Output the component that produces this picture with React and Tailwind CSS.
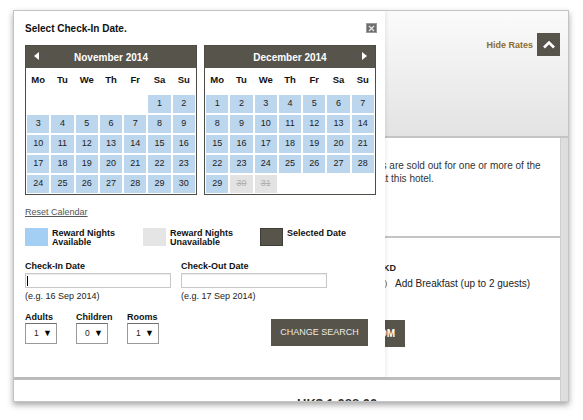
import React from 'react';

const WEEK = ['Mo', 'Tu', 'We', 'Th', 'Fr', 'Sa', 'Su'];

// November 2014 starts on a Saturday
const NOV = [...Array(5).fill(null), ...Array.from({ length: 30 }, (_, i) => ({ d: i + 1 }))];
// December 2014 starts on a Monday; the last two nights are not bookable
const DEC = Array.from({ length: 31 }, (_, i) => ({ d: i + 1, off: i + 1 >= 30 }));

function Calendar({ title, days, prev, next }) {
  return (
    <div className="w-[172px] border border-[#4f4c45] bg-white">
      <div className="relative flex h-[22px] items-center justify-center bg-[#57544b] text-[10px] font-bold text-white">
        {prev && (
          <span className="absolute left-[8px] top-[6px] h-0 w-0 border-y-[4.5px] border-r-[5px] border-y-transparent border-r-white" />
        )}
        {title}
        {next && (
          <span className="absolute right-[8px] top-[6px] h-0 w-0 border-y-[4.5px] border-l-[5px] border-y-transparent border-l-white" />
        )}
      </div>
      <div className="grid h-[25px] grid-cols-7 items-center gap-x-[2px] px-px text-center text-[9.5px] font-bold text-[#111]">
        {WEEK.map((w) => (
          <div key={w}>{w}</div>
        ))}
      </div>
      <div className="grid grid-cols-7 gap-[2px] px-px pt-[2px] pb-px">
        {days.map((day, i) =>
          day ? (
            <div
              key={i}
              className={
                day.off
                  ? 'flex h-[18px] items-center justify-center bg-[#e3e3e3] text-[9px] text-[#b0b0b0] line-through'
                  : 'flex h-[18px] items-center justify-center bg-[#bcd6ee] text-[9px] text-[#1c1c1c]'
              }
            >
              {day.d}
            </div>
          ) : (
            <div key={i} className="h-[18px]" />
          )
        )}
      </div>
    </div>
  );
}

function Picker({ label, value }) {
  return (
    <div className="w-[51px]">
      <div className="text-[9px] font-bold leading-[11px] text-[#111]">{label}</div>
      <div className="flex h-[21px] w-[32px] items-center border border-[#9a9a9a] border-t-[#6f6f6f] bg-white pl-[8px] pr-[4px] text-[8.5px] text-[#222]">
        <span>{value}</span>
        <span className="ml-auto text-[9px] leading-none text-black">▼</span>
      </div>
    </div>
  );
}

function DateField({ label, hint, focused }) {
  return (
    <div className="w-[146px]">
      <div className="text-[9px] font-bold leading-[11px] text-[#111]">{label}</div>
      <div className="mt-[1px] flex h-[15px] items-center border border-[#c9c9c9] bg-white pl-px shadow-[inset_0_1px_1px_rgba(0,0,0,0.08)]">
        {focused && <span className="h-[10px] w-px bg-black" />}
      </div>
      <div className="mt-[3px] text-[9px] leading-[11px] text-[#222]">{hint}</div>
    </div>
  );
}

function DatePickerModal() {
  return (
    <div className="absolute left-0 top-0 z-10 h-[366px] w-[371px] bg-white pl-[11px] pr-[9px] pt-[12px] shadow-[2px_0_3px_rgba(0,0,0,0.06)]">
      <div className="text-[10px] font-bold leading-[12px] text-[#111]">Select Check-In Date.</div>
      <button className="absolute left-[352px] top-[12px] flex h-[10px] w-[11px] items-center justify-center border border-[#9b9b9b] bg-[#6e6e6e]">
        <svg width="7" height="7" viewBox="0 0 7 7">
          <path d="M1 1 L6 6 M6 1 L1 6" stroke="#e2e2e2" strokeWidth="1.4" />
        </svg>
      </button>

      <div className="mt-[10px] flex gap-[7px]">
        <Calendar title="November 2014" days={NOV} prev />
        <Calendar title="December 2014" days={DEC} next />
      </div>

      <div className="mt-[12px] text-[9px] leading-[11px] text-[#555] underline">Reset Calendar</div>

      {/* Legend */}
      <div className="mt-[10px] flex">
        <div className="flex w-[118px] gap-[4px]">
          <span className="h-[18px] w-[23px] bg-[#a4cff5]" />
          <span className="pt-px text-[9px] font-bold leading-[9px] text-[#111]">
            Reward Nights
            <br />
            Available
          </span>
        </div>
        <div className="flex w-[117px] gap-[4px]">
          <span className="h-[18px] w-[23px] bg-[#e5e5e5]" />
          <span className="pt-px text-[9px] font-bold leading-[9px] text-[#111]">
            Reward Nights
            <br />
            Unavailable
          </span>
        </div>
        <div className="flex gap-[4px]">
          <span className="h-[18px] w-[23px] border border-[#3f3d37] bg-[#57544b]" />
          <span className="pt-px text-[9px] font-bold leading-[9px] text-[#111]">Selected Date</span>
        </div>
      </div>

      <div className="mt-[14px] flex gap-[10px]">
        <DateField label="Check-In Date" hint="(e.g. 16 Sep 2014)" focused />
        <DateField label="Check-Out Date" hint="(e.g. 17 Sep 2014)" />
      </div>

      <div className="mt-[10px] flex items-start">
        <Picker label="Adults" value="1" />
        <Picker label="Children" value="0" />
        <Picker label="Rooms" value="1" />
        <button className="ml-auto mr-[8px] mt-[7px] h-[27px] w-[97px] bg-[#57544b] text-[9px] text-[#ecebe6]">
          CHANGE SEARCH
        </button>
      </div>
    </div>
  );
}

export default function App() {
  return (
    <div className="h-[420px] w-[583px] overflow-hidden bg-white pl-[13px] pt-[10px] font-['Liberation_Sans',Arial,sans-serif]">
      <div className="relative flex h-[392px] w-[556px] flex-col overflow-hidden border border-[#c4c4c4] shadow-[0_3px_6px_rgba(0,0,0,0.35)]">
        {/* Rates header */}
        <div className="flex h-[127px] shrink-0 items-start justify-end gap-[4px] border-b-2 border-[#c4c4c4] bg-gradient-to-b from-[#fbfbfb] to-[#e3e3e3] pr-[8px] pt-[22px]">
          <span className="mt-[6px] text-[9px] font-bold text-[#8c6c2e]">Hide Rates</span>
          <button className="flex h-[23px] w-[23px] items-center justify-center bg-[#57544b]">
            <svg width="14" height="9" viewBox="0 0 14 9">
              <path d="M2 7.5 L7 2.5 L12 7.5" fill="none" stroke="white" strokeWidth="2.6" />
            </svg>
          </button>
        </div>

        <div className="flex flex-1">
          <div className="flex flex-1 flex-col">
            {/* notice; the part under the date picker is clipped */}
            <div className="h-[100px] border-b-2 border-[#c4c4c4] bg-white pt-[21px]">
              <div className="ml-[371px] overflow-hidden">
                <div className="-ml-[64px] whitespace-nowrap text-[10px] leading-[13px] text-[#333]">
                  Reward Nights are sold out for one or more of the
                  <br />
                  you selected at this hotel.
                </div>
              </div>
            </div>

            <div className="h-[142px] border-b-[3px] border-[#bdbdbd] bg-white pt-[25px]">
              <div className="ml-[371px] overflow-hidden">
                <div className="-ml-[85px] w-[105px]">
                  <div className="pr-[9px] text-right text-[9px] font-bold leading-[11px] text-[#222]">Rate in HKD</div>
                  <div className="ml-[75px] mt-[4px] flex items-center gap-[8px] whitespace-nowrap text-[10px] leading-[12px] text-[#222]">
                    <span className="h-[12px] w-[12px] shrink-0 rounded-full border border-[#777] bg-white" />
                    Add Breakfast (up to 2 guests)
                  </div>
                  <div className="mt-[30px] flex justify-end">
                    <button className="h-[27px] whitespace-nowrap bg-[#57544b] pl-[12px] pr-[10px] text-[10px] font-bold text-white">
                      BOOK ROOM
                    </button>
                  </div>
                </div>
              </div>
            </div>

            <div className="flex-1 bg-white pl-[283px] pt-[16px] text-[13px] font-bold leading-[16px] text-[#333]">
              HK$ 1,088.00
            </div>
          </div>
          <div className="w-[8px] border-l border-[#cfcfcf] bg-[#dedede]" />
        </div>

        <DatePickerModal />
      </div>
    </div>
  );
}
